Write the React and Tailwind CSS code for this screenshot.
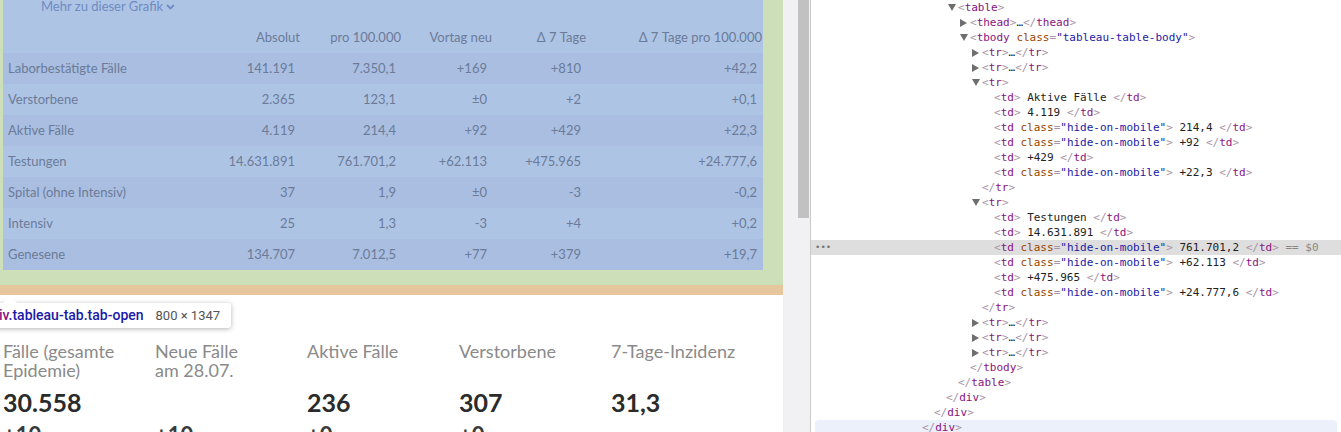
import React from 'react';

const tableRows = [
  ['Laborbestätigte Fälle', '141.191', '7.350,1', '+169', '+810', '+42,2'],
  ['Verstorbene', '2.365', '123,1', '±0', '+2', '+0,1'],
  ['Aktive Fälle', '4.119', '214,4', '+92', '+429', '+22,3'],
  ['Testungen', '14.631.891', '761.701,2', '+62.113', '+475.965', '+24.777,6'],
  ['Spital (ohne Intensiv)', '37', '1,9', '±0', '-3', '-0,2'],
  ['Intensiv', '25', '1,3', '-3', '+4', '+0,2'],
  ['Genesene', '134.707', '7.012,5', '+77', '+379', '+19,7'],
];

const headers = ['', 'Absolut', 'pro 100.000', 'Vortag neu', 'Δ 7 Tage', 'Δ 7 Tage pro 100.000'];
const colWidths = ['w-[202px]', 'w-[96px]', 'w-[101px]', 'w-[91px]', 'w-[94px]', 'w-[176px]'];

const stats = [
  { label: ['Fälle (gesamte', 'Epidemie)'], value: '30.558', delta: '+10' },
  { label: ['Neue Fälle', 'am 28.07.'], value: '', delta: '+10' },
  { label: ['Aktive Fälle'], value: '236', delta: '+0' },
  { label: ['Verstorbene'], value: '307', delta: '+0' },
  { label: ['7-Tage-Inzidenz'], value: '31,3', delta: '' },
];

// devtools helpers
const Br = ({ children }) => <span className="text-[#a894a6]">{children}</span>;
const Tag = ({ children }) => <span className="text-[#881280]">{children}</span>;

const Open = ({ name, cls }) => (
  <>
    <Br>&lt;</Br>
    <Tag>{name}</Tag>
    {cls && (
      <>
        {' '}
        <span className="text-[#994500]">class</span>
        <span className="text-[#a894a6]">=</span>
        <span className="text-[#1a1aa6]">"{cls}"</span>
      </>
    )}
    <Br>&gt;</Br>
  </>
);

const Close = ({ name }) => (
  <>
    <Br>&lt;/</Br>
    <Tag>{name}</Tag>
    <Br>&gt;</Br>
  </>
);

const Collapsed = ({ name }) => (
  <>
    <Open name={name} />
    <span className="text-[#222]">…</span>
    <Close name={name} />
  </>
);

const Td = ({ cls, text }) => (
  <>
    <Open name="td" cls={cls} />
    <span className="text-[#222]"> {text} </span>
    <Close name="td" />
  </>
);

const lines = [
  { l: 0, a: 'down', c: <Open name="table" /> },
  { l: 1, a: 'right', c: <Collapsed name="thead" /> },
  { l: 1, a: 'down', c: <Open name="tbody" cls="tableau-table-body" /> },
  { l: 2, a: 'right', c: <Collapsed name="tr" /> },
  { l: 2, a: 'right', c: <Collapsed name="tr" /> },
  { l: 2, a: 'down', c: <Open name="tr" /> },
  { l: 3, c: <Td text="Aktive Fälle" /> },
  { l: 3, c: <Td text="4.119" /> },
  { l: 3, c: <Td cls="hide-on-mobile" text="214,4" /> },
  { l: 3, c: <Td cls="hide-on-mobile" text="+92" /> },
  { l: 3, c: <Td text="+429" /> },
  { l: 3, c: <Td cls="hide-on-mobile" text="+22,3" /> },
  { l: 2, c: <Close name="tr" /> },
  { l: 2, a: 'down', c: <Open name="tr" /> },
  { l: 3, c: <Td text="Testungen" /> },
  { l: 3, c: <Td text="14.631.891" /> },
  {
    l: 3,
    sel: true,
    c: (
      <>
        <Td cls="hide-on-mobile" text="761.701,2" />
        <span className="text-[#888]"> == $0</span>
      </>
    ),
  },
  { l: 3, c: <Td cls="hide-on-mobile" text="+62.113" /> },
  { l: 3, c: <Td text="+475.965" /> },
  { l: 3, c: <Td cls="hide-on-mobile" text="+24.777,6" /> },
  { l: 2, c: <Close name="tr" /> },
  { l: 2, a: 'right', c: <Collapsed name="tr" /> },
  { l: 2, a: 'right', c: <Collapsed name="tr" /> },
  { l: 2, a: 'right', c: <Collapsed name="tr" /> },
  { l: 1, c: <Close name="tbody" /> },
  { l: 0, c: <Close name="table" /> },
  { l: -1, c: <Close name="div" /> },
  { l: -2, c: <Close name="div" /> },
  { l: -3, hover: true, c: <Close name="div" /> },
];

const Arrow = ({ dir }) => {
  if (dir === 'down') {
    return (
      <svg width="8" height="7" viewBox="0 0 8 7" className="fill-[#6e6e6e]">
        <polygon points="0,0 8,0 4,7" />
      </svg>
    );
  }
  if (dir === 'right') {
    return (
      <svg width="7" height="8" viewBox="0 0 7 8" className="fill-[#6e6e6e]">
        <polygon points="0,0 7,4 0,8" />
      </svg>
    );
  }
  return null;
};

const indentClass = {
  '-3': 'pl-[77px]',
  '-2': 'pl-[89px]',
  '-1': 'pl-[101px]',
  '0': 'pl-[113px]',
  '1': 'pl-[125px]',
  '2': 'pl-[137px]',
  '3': 'pl-[149px]',
};

export default function App() {
  return (
    <div className="w-[1341px] h-[432px] overflow-hidden flex bg-white">
      {/* page */}
      <div className="w-[783px] shrink-0 overflow-hidden relative font-['Lato',sans-serif]">
        <div className="bg-[#cddfb8] pl-[3px] pr-[20px] pb-[15px]">
          <div className="bg-[#aec4e5] text-[13px] text-[#6b7b98]">
            <div className="h-[22px] pl-[38px] flex items-start">
              <span className="flex items-center gap-[3px] text-[#6f8bc2] leading-[13px]">
                Mehr zu dieser Grafik
                <svg width="9" height="6" viewBox="0 0 9 6" className="stroke-[#6f8bc2]" fill="none" strokeWidth="1.8">
                  <path d="M1 1l3.5 3.5L8 1" />
                </svg>
              </span>
            </div>
            <div className="flex h-[31px] items-center">
              {headers.map((h, i) => (
                <div key={i} className={`${colWidths[i]} text-right pr-[1px]`}>
                  {h}
                </div>
              ))}
            </div>
            {tableRows.map((row, r) => (
              <div
                key={r}
                className={`flex h-[31px] items-center ${r % 2 === 0 ? 'bg-[#a9bee1]' : 'bg-[#aec4e5]'}`}
              >
                {row.map((cell, i) => (
                  <div
                    key={i}
                    className={`${colWidths[i]} ${i === 0 ? 'text-left pl-[5px]' : 'text-right pr-[6px]'}`}
                  >
                    {cell}
                  </div>
                ))}
              </div>
            ))}
          </div>
        </div>
        <div className="h-[10px] bg-[#e6c79d]" />

        <div className="pt-[8px] pl-[3px]">
          <div className="text-[22px] leading-[26px] font-bold text-[#2b2b2b]">Meldungen</div>
          <div className="mt-[13px] grid grid-cols-[152px_152px_152px_152px_152px]">
            {stats.map((s, i) => (
              <div key={i}>
                <div className="h-[40px] text-[18px] leading-[19px] text-[#8a8a8a]">
                  {s.label.map((l, j) => (
                    <div key={j}>{l}</div>
                  ))}
                </div>
                <div className="h-[36px] pt-[5px] text-[25px] leading-[30px] font-bold text-[#2b2b2b]">
                  {s.value}
                </div>
                <div className="text-[22px] leading-[26px] pt-[4px] font-bold text-[#3a3a3a]">{s.delta}</div>
              </div>
            ))}
          </div>
        </div>

        {/* inspect tooltip */}
        <div className="absolute left-[-9px] top-[303px] bg-white rounded-[3px] shadow-[0_1px_5px_rgba(0,0,0,0.3)] h-[25px] pr-[11px] flex items-center gap-[12px] font-['Roboto',sans-serif]">
          <span className="absolute left-[14px] top-[-5px] w-[10px] h-[10px] bg-white rotate-45" />
          <span className="relative text-[14px] font-medium">
            <span className="text-[#881280]">div</span>
            <span className="text-[#1a1aa6]">.tableau-tab.tab-open</span>
          </span>
          <span className="relative text-[13px] text-[#555]">800 × 1347</span>
        </div>
      </div>

      {/* gutter + scrollbar */}
      <div className="w-[28px] shrink-0 bg-[#f1f1f3] border-r border-[#cbcbcb]">
        <div className="ml-[15px] w-[11px] h-[218px] bg-[#c1c1c1]" />
      </div>

      {/* devtools elements panel */}
      <div className="flex-1 font-['DejaVu_Sans_Mono',monospace] text-[11px] leading-[15px] whitespace-pre">
        {lines.map((ln, i) => (
          <div
            key={i}
            className={`h-[15px] flex items-center ${ln.sel ? 'bg-[#dedede]' : ''} ${
              ln.hover ? 'bg-[#ebf0fa] mx-[4px] rounded-[4px]' : ''
            }`}
          >
            <div className={`${ln.hover ? 'w-[20px]' : 'w-[24px]'} text-[#777] text-[9px] pl-[4px]`}>
              {ln.sel ? '•••' : ''}
            </div>
            <div className={`${indentClass[String(ln.l)]} flex items-center`}>
              <div className="w-[10px] flex items-center">
                <Arrow dir={ln.a} />
              </div>
              <div>{ln.c}</div>
            </div>
          </div>
        ))}
      </div>
    </div>
  );
}
